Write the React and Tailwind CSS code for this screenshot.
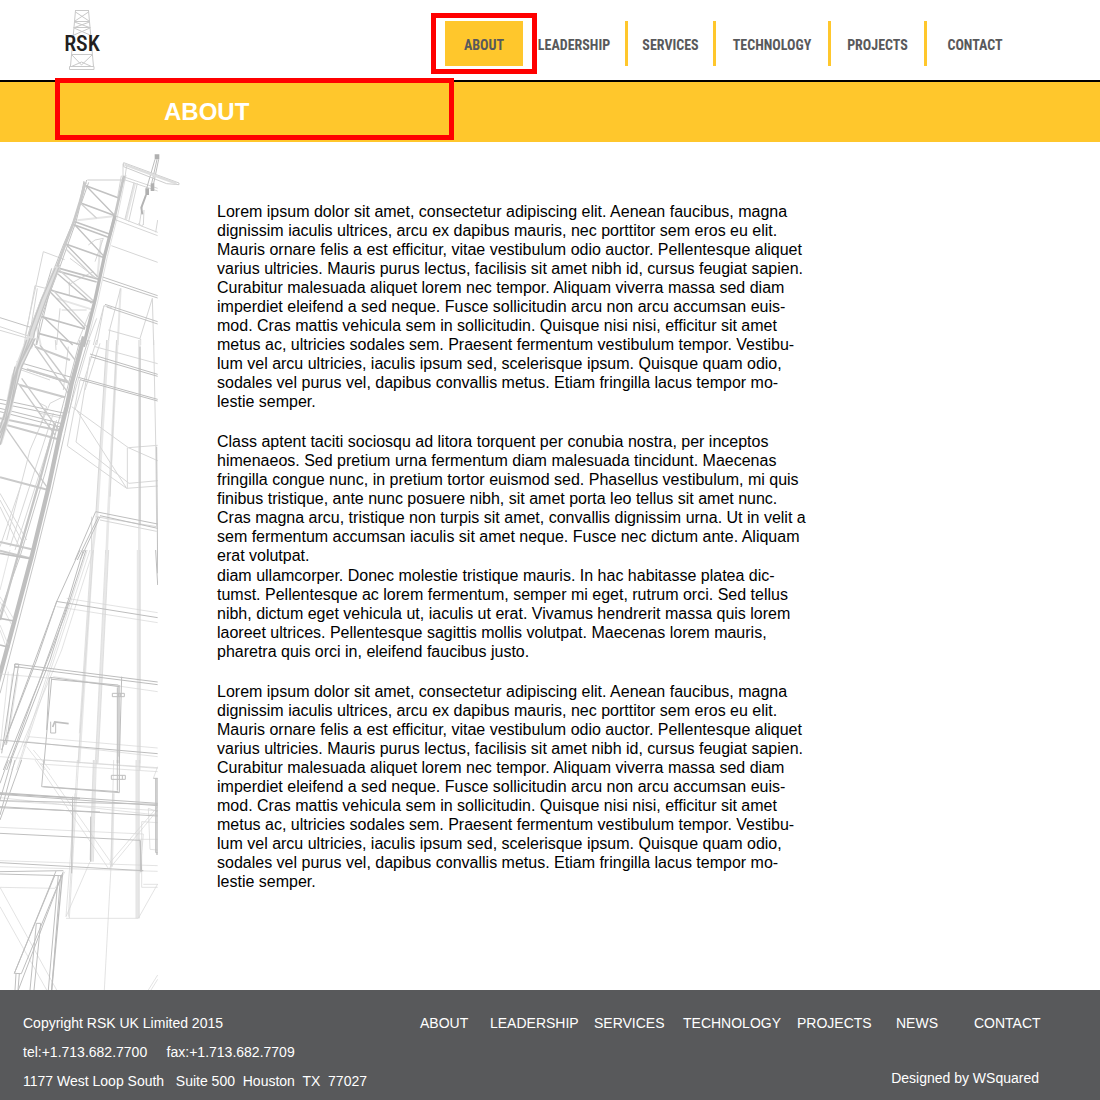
import React from "react";

const navItems = [
  { label: "ABOUT", cell: "w-[78px] bg-[#ffc72c]" },
  { label: "LEADERSHIP", cell: "w-[105px] border-r-3" },
  { label: "SERVICES", cell: "w-[88px] border-r-3" },
  { label: "TECHNOLOGY", cell: "w-[115px] border-r-3" },
  { label: "PROJECTS", cell: "w-[96px] border-r-3" },
  { label: "CONTACT", cell: "w-[96px]" },
];

const footerItems = [
  { label: "ABOUT", cell: "w-[70px]" },
  { label: "LEADERSHIP", cell: "w-[104px]" },
  { label: "SERVICES", cell: "w-[89px]" },
  { label: "TECHNOLOGY", cell: "w-[114px]" },
  { label: "PROJECTS", cell: "w-[99px]" },
  { label: "NEWS", cell: "w-[78px]" },
  { label: "CONTACT", cell: "w-[65px]" },
];

const lorem = [
  "Lorem ipsum dolor sit amet, consectetur adipiscing elit. Aenean faucibus, magna",
  "dignissim iaculis ultrices, arcu ex dapibus mauris, nec porttitor sem eros eu elit.",
  "Mauris ornare felis a est efficitur, vitae vestibulum odio auctor. Pellentesque aliquet",
  "varius ultricies. Mauris purus lectus, facilisis sit amet nibh id, cursus feugiat sapien.",
  "Curabitur malesuada aliquet lorem nec tempor. Aliquam viverra massa sed diam",
  "imperdiet eleifend a sed neque. Fusce sollicitudin arcu non arcu accumsan euis-",
  "mod. Cras mattis vehicula sem in sollicitudin. Quisque nisi nisi, efficitur sit amet",
  "metus ac, ultricies sodales sem. Praesent fermentum vestibulum tempor. Vestibu-",
  "lum vel arcu ultricies, iaculis ipsum sed, scelerisque ipsum. Quisque quam odio,",
  "sodales vel purus vel, dapibus convallis metus. Etiam fringilla lacus tempor mo-",
  "lestie semper.",
];

const classAptent = [
  "Class aptent taciti sociosqu ad litora torquent per conubia nostra, per inceptos",
  "himenaeos. Sed pretium urna fermentum diam malesuada tincidunt. Maecenas",
  "fringilla congue nunc, in pretium tortor euismod sed. Phasellus vestibulum, mi quis",
  "finibus tristique, ante nunc posuere nibh, sit amet porta leo tellus sit amet nunc.",
  "Cras magna arcu, tristique non turpis sit amet, convallis dignissim urna. Ut in velit a",
  "sem fermentum accumsan iaculis sit amet neque. Fusce nec dictum ante. Aliquam",
  "erat volutpat.",
];

const diam = [
  "diam ullamcorper. Donec molestie tristique mauris. In hac habitasse platea dic-",
  "tumst. Pellentesque ac lorem fermentum, semper mi eget, rutrum orci. Sed tellus",
  "nibh, dictum eget vehicula ut, iaculis ut erat. Vivamus hendrerit massa quis lorem",
  "laoreet ultrices. Pellentesque sagittis mollis volutpat. Maecenas lorem mauris,",
  "pharetra quis orci in, eleifend faucibus justo.",
];

function Paragraph({ lines, className }) {
  return <p className={`whitespace-pre-line ${className}`}>{lines.join("\n")}</p>;
}

function Logo() {
  return (
    <svg viewBox="0 0 44 64" className="h-16 w-11" role="img" aria-label="RSK">
      <g fill="none" stroke="#c9c9c9" strokeWidth="1">
        <path d="M15 2.5h14M14.5 13.5h15M13.5 19.5h17M12 46.5h20M9.5 58.5h24.5v3H9.500zM15.500 2.500 10.500 58M28.500 2.500l5 56" />
        <path d="m15.500 4 13.500 9M28.500 4 15 13M14.500 14l15 5.500M29.500 14l-15 5.500M14 20l16 7M30 20l-16 7M12 47l9.500 10L32 47M21.500 54l-10 4.500M21.500 54l10 4.500" />
      </g>
      <text
        x="22"
        y="43"
        textAnchor="middle"
        className="font-['Roboto_Condensed','Liberation_Sans',sans-serif] text-[22px] font-medium"
        fill="#231f20"
      >
        RSK
      </text>
    </svg>
  );
}

function RigDrawing() {
  return (
    <svg viewBox="0 0 540 2544" className="block h-[848px] w-[180px]" fill="none" aria-hidden="true">
      <defs>
        <clipPath id="edge">
          <path d="M0 0H540V160H474V2544H0Z" />
        </clipPath>
      </defs>
      <g clipPath="url(#edge)">
        {/* mast and crown */}
        <g transform="translate(0 9)">
          <g stroke="#e6e6e6" strokeWidth="6">
            <path d="M262 105H372M232 226 340 214M170 460 275 493M110 545 122 600M405 115 378 225M303 285 292 400M362 430 353 600" />
          </g>
          <g stroke="#d6d6d6" strokeWidth="3">
            <path d="M76 570 130 320 194 344M105 422 160 436M105 422 72 600M84 600 112 430M0 545 90 575M0 556 84 580M370 95 473 130M370 103 473 138M412 115 386 230M402 112 375 222M345 212 473 262M340 222 473 272M467 262 473 225M334 302 473 352M265 300 285 285 310 280 285 350M205 420 240 400 280 380M210 340 290 400M208 410V450M280 600 312 482 290 600M312 482 335 488M362 430 330 550 324 600M457 460 420 580M457 460 461 600M325 555 422 582V600M180 490 170 600M290 520 260 600M230 600 270 500M185 495h75" />
            <path d="M364 92 353 155M380 62 373 110M369 56V92M415 235l10 8 6-6M418 240 427 180M430 240 432 195" />
          </g>
          <path d="M465 43 440 130M471 43 455 115M476 43 460 120" stroke="#bcbcbc" strokeWidth="3" />
          <g stroke="#c2c2c2" strokeWidth="3">
            <path d="M0 518 95 548M308 396 473 452M308 405 473 459M315 478 473 530M320 486 473 537M252 108 240 170 220 230 190 300 163 370 125 460 90 550 75 600M260 105 228 230 180 365 145 455 110 600M266 112 242 180M155 370 110 520 95 600M178 360 120 530 108 600" />
          </g>
          <path d="M371 53 537 114 537 119 500 116 371 65ZM376 60 520 111" stroke="#cdcdcd" strokeWidth="3" />
          <path d="M374 59 530 116" stroke="#dedede" strokeWidth="7" />
          <g stroke="#c2c2c2" strokeWidth="5">
            <path d="M258 122 358 160M240 173 345 212M225 230 330 268M222 239 325 277M195 296 313 338M170 368 297 403M165 376 290 411M150 435 282 472M125 515 255 552M115 565 245 600" />
            <path d="M258 122 345 212M225 240 313 335M200 300 293 395M160 375 275 475M150 440 255 550M130 515 218 600" strokeWidth="4" />
            <path d="M240 173 290 220M198 312 283 398M178 375 283 470M162 438 265 550" stroke="#d2d2d2" strokeWidth="4" />
          </g>
          <path d="M256 112 240 170 220 235 195 300 168 375" stroke="#c9c9c9" strokeWidth="8" />
          <path d="M172 365 130 465 95 560 88 610" stroke="#dedede" strokeWidth="17" />
          <path d="M166 368 124 465 90 560 82 605M176 368 138 465 104 560 96 605" stroke="#c4c4c4" strokeWidth="4" />
          <path d="M372 92 345 212 330 270" stroke="#c6c6c6" strokeWidth="8" />
          <path d="M345 212 313 335 285 465 250 605" stroke="#bcbcbc" strokeWidth="10" />
          <path d="M378 90 352 216 322 335 293 470 260 600" stroke="#d0d0d0" strokeWidth="2" />
          <path d="M464 28h14v15h-14zM452 115h11v23h-11zM436 130h11v20h-11z" fill="#b0b0b0" />
          <path d="M438 150 424 188 427 208" stroke="#b4b4b4" strokeWidth="6" />
        </g>

        {/* lower mast and facade frames */}
        <g transform="translate(0 594)">
          <path d="M418 0V1290M324 0 292 515 277 640M352 0 325 520 320 640" stroke="#e8e8e8" strokeWidth="8" />
          <g stroke="#d8d8d8" strokeWidth="3">
            <path d="M320 0 288 515M350 0 330 470M461 0 467 300 470 560M285 20 473 71M270 50 228 306 387 430 473 422M215 200 385 323 473 316M230 210 380 445M202 318 380 445 473 438M202 318 240 120M382 323V445M385 323 473 362M290 0 225 210M300 10 255 150M270 0 205 220M0 460 80 600M0 480 70 610M0 500 60 625M20 600 90 330 150 190 190 170M30 620 160 220M45 630 170 240M0 620 65 430M120 260 140 200 120 190M120 220 190 235M50 85 150 120M205 20 190 150M166 0 168 30" />
            <path d="M300 540 470 574M287 530 470 560M275 530V630" />
          </g>
          <g stroke="#bebebe" strokeWidth="3">
            <path d="M270 42 473 103M272 50 473 109M235 112 473 178M240 119 473 183M50 65 225 115M50 80 215 132M0 178 195 220M0 190 195 230M287 515 473 552M300 527 473 565M287 515 225 660M300 530 240 660M295 530 232 660M0 205 190 252M0 215 185 262M470 320 473 700M420 20V556" />
          </g>
          <g stroke="#cacaca" strokeWidth="6">
            <path d="M105 20 210 60M80 88 205 125M60 135 195 172M0 235 180 272M0 250 175 298M0 412 145 450M0 606 95 628M0 632 90 655" />
            <path d="M100 10 205 160M65 115 180 275M55 130 165 285M15 260 140 440M180 0 225 60M120 15 210 135" strokeWidth="4" />
          </g>
          <path d="M92 -10 45 110 25 210 -5 310" stroke="#e0e0e0" strokeWidth="22" />
          <path d="M98 -5 55 80 30 210 0 295M80 0 40 120 10 240M90 -5 45 110 15 245 0 280M45 80 20 200 0 265M106 -5 65 80 25 230 0 315" stroke="#c2c2c2" strokeWidth="4" />
          <path d="M252 -10 215 130 200 200 180 280 145 445 95 650 20 930 -10 1040" stroke="#bfbfbf" strokeWidth="13" />
          <path d="M240 0 190 190 135 400 60 650 -5 830M264 0 226 130 194 280 156 450 104 660 34 930 0 1060" stroke="#c6c6c6" strokeWidth="3" />
          <path d="M165 250 125 400 50 660 0 840" stroke="#c6c6c6" strokeWidth="7" />
        </g>

        {/* door and bracing */}
        <g transform="translate(0 1224)">
          <path d="M278 0 237 640M322 0 290 640M357 405 354 640" stroke="#e8e8e8" strokeWidth="8" />
          <g stroke="#d4d4d4" strokeWidth="2">
            <path d="M280 0 234 640M274 0 238 550M326 0 294 640M317 0 286 640M412 0V640M420 0V640M200 145 473 188M170 170 473 218M160 380 473 425M0 372 155 385M85 560 473 594M80 575 473 620M0 620 473 655M100 600 150 660M80 590 135 660M88 560 70 590M60 640 270 0M50 660 262 0M280 0 185 300 35 660M0 140 40 205M0 155 35 225M0 225 25 285M0 240 20 295M25 365 0 600M37 370 15 585M55 370 22 580M0 120 30 0" />
          </g>
          <g stroke="#bdbdbd" strokeWidth="3">
            <path d="M240 0 170 155 5 600M250 0 205 150 115 400 10 660M258 0 195 195 100 440 20 660M168 154 473 203M45 342 473 396M45 350 473 404M45 342 5 610M55 350 18 585M150 382 358 410M155 388 355 405M155 385 132 640M148 382 140 540M365 380 358 640M357 405V620M352 412V640M0 570 473 611M170 155 110 330 20 560M467 0 473 105M205 155 150 330 30 640" />
            <path d="M337 430h36v10h-36zM356 430v10M362 430v10M152 515v34h15v-34M44 342h12v10h-12z" stroke="#bebebe" />
          </g>
          <path d="M206 521 164 516 158 531M0 205 42 213M0 285 28 292M0 10 95 27" stroke="#c0c0c0" strokeWidth="5" />
        </g>

        {/* platform, box and stairs */}
        <g transform="translate(0 1854)">
          <path d="M284 0 274 305M413 0V475M340 100 335 320" stroke="#e7e7e7" strokeWidth="8" />
          <g stroke="#d4d4d4" strokeWidth="2">
            <path d="M232 0 205 470M225 100 198 470M236 0 208 475M280 0 270 300M289 0 280 305M341 0 338 120 333 320 313 690M408 0V475M418 0V475M105 0 325 325M125 10 335 310M130 0 473 23M120 12 473 35M0 122 473 152M0 113 473 165M473 140 328 310M473 150 335 318M0 202 430 222M430 222 420 340M0 302 473 317M0 320 473 334M0 382 165 385 195 335M198 475H415L473 372M270 305 198 470M425 185 473 188M425 185V382H473M430 373H473M473 20 460 55M445 145 450 268 473 270M445 145 473 155M415 238H473M0 382 170 690M0 440 140 690M445 690 473 645M453 690 473 658M328 328 335 310" />
          </g>
          <g stroke="#bfbfbf" strokeWidth="3">
            <path d="M132 0 125 80 358 98V0M130 80 355 95M352 0V92M0 98 473 130M0 103 473 137M0 122 473 133M0 140 473 168M0 143 300 156M0 220 420 241 425 335M421 241V335M0 308 430 332M0 335 190 332M0 342 187 347M25 0 0 70M45 0 0 165M35 0 0 120M65 0 0 180M165 345 105 490M105 490 43 640 64 641 190 335M168 333 43 640M182 345 155 690M175 345 145 690M188 340 55 690M109 490H122L102 690M109 490 90 690M48 641 45 690M58 641 54 690M460 55H473M467 55V278H473M218 110 215 340M272 170V305" />
            <path d="M334 46h42v12h-42zM358 46v12M367 46v12" />
          </g>
          <path d="M471 55V285M187 345 155 690M0 101 240 115" stroke="#bdbdbd" strokeWidth="4" />
        </g>
      </g>
    </svg>
  );
}

export default function App() {
  return (
    <div className="relative flex min-h-screen flex-col bg-white font-['Liberation_Sans',Arial,sans-serif] text-black">
      <header className="flex h-[82px] items-start justify-between border-b-2 border-black pr-[77px] pl-[60px]">
        <a href="#home" className="mt-2">
          <Logo />
        </a>
        <nav aria-label="Main" className="relative mt-[21px]">
          <div className="flex h-[45px]">
            {navItems.map((item) => (
              <a
                key={item.label}
                href={`#${item.label.toLowerCase()}`}
                className={`flex items-center justify-center border-[#ffc72c] pt-0.5 font-['Roboto_Condensed','Liberation_Sans',sans-serif] text-sm font-bold text-[#58595b] ${item.cell}`}
              >
                {item.label}
              </a>
            ))}
          </div>
          <div className="pointer-events-none absolute -top-2 -left-3.5 h-[61px] w-[106px] border-5 border-[#ff0000]" />
        </nav>
      </header>

      <section className="relative flex h-[60px] items-center bg-[#ffc72c] pl-[164px]">
        <h1 className="text-2xl font-bold text-white">ABOUT</h1>
        <div className="pointer-events-none absolute -top-1 left-[55px] h-[62px] w-[399px] border-5 border-[#ff0000]" />
      </section>

      <main className="flex grow items-start">
        <div className="shrink-0">
          <RigDrawing />
        </div>
        <article className="ml-[37px] pt-[60px] text-base leading-[19px]">
          <Paragraph lines={lorem} className="mb-[21px]" />
          <Paragraph lines={classAptent} className="mb-px" />
          <Paragraph lines={diam} className="mb-[21px]" />
          <Paragraph lines={lorem} className="" />
        </article>
      </main>

      <footer className="flex items-start justify-between bg-[#58595b] pt-[19px] pr-[61px] pb-1 pl-[23px] text-sm leading-[29px] text-white">
        <address className="whitespace-pre not-italic">
          <p>Copyright RSK UK Limited 2015</p>
          <p>{"tel:+1.713.682.7700     fax:+1.713.682.7709"}</p>
          <p>{"1177 West Loop South   Suite 500  Houston  TX  77027"}</p>
        </address>
        <div className="flex flex-col gap-[26px]">
          <nav aria-label="Footer" className="flex">
            {footerItems.map((item) => (
              <a key={item.label} href={`#${item.label.toLowerCase()}`} className={item.cell}>
                {item.label}
              </a>
            ))}
          </nav>
          <p className="text-right">Designed by WSquared</p>
        </div>
      </footer>
    </div>
  );
}
